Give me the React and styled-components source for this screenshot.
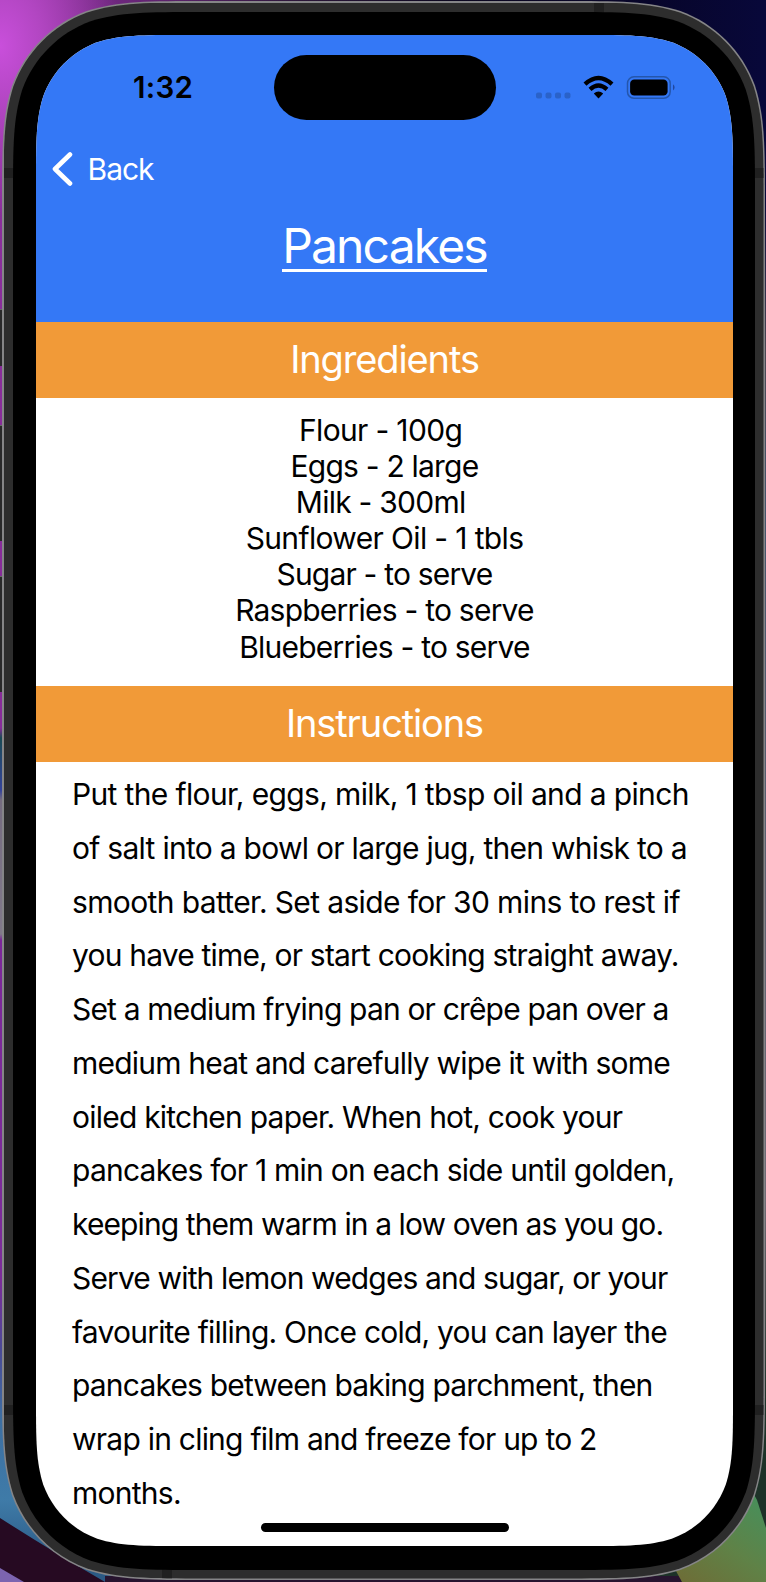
import React from 'react';
import styled, { createGlobalStyle } from 'styled-components';

const GlobalStyle = createGlobalStyle`
  * { box-sizing: border-box; }
  body { margin: 0; font-family: Inter, "Liberation Sans", sans-serif; }
`;

// Rounded rectangle with continuous-curvature corners of nominal radius r.
const smoothRect = (w, h, r) => {
  const e = 1.52866 * r;
  const c = 1.08849 * r;
  const d = 0.86841 * r;
  const m = 0.63149 * r;
  const n = 0.07491 * r;
  const p = 0.37282 * r;
  const q = 0.16906 * r;
  return `path("M${e} 0H${w - e}C${w - c} 0 ${w - d} 0 ${w - m} ${n}C${w - p} ${q} ${w - q} ${p} ${w - n} ${m}C${w} ${d} ${w} ${c} ${w} ${e}V${h - e}C${w} ${h - c} ${w} ${h - d} ${w - n} ${h - m}C${w - q} ${h - p} ${w - p} ${h - q} ${w - m} ${h - n}C${w - d} ${h} ${w - c} ${h} ${w - e} ${h}H${e}C${c} ${h} ${d} ${h} ${m} ${h - n}C${p} ${h - q} ${q} ${h - p} ${n} ${h - m}C0 ${h - d} 0 ${h - c} 0 ${h - e}V${e}C0 ${c} 0 ${d} ${n} ${m}C${q} ${p} ${p} ${q} ${m} ${n}C${d} 0 ${c} 0 ${e} 0Z")`;
};

const Desktop = styled.main`
  position: relative;
  width: 766px;
  height: 1582px;
  overflow: hidden;
  padding: 1px 1px 0 2px;
  background:
    radial-gradient(ellipse 120px 170px at 0 46px, #c94fdb 0, #b246c2 35%, transparent 100%) 0 0 / 200px 300px no-repeat,
    linear-gradient(90deg, #8a3197, #6a267a 130px, #2b1638 300px, #0d0820 450px, #07052a 650px, #08083a) 0 0 / 766px 150px no-repeat,
    linear-gradient(#8b2f9b, #872b99 728px, #1a4a55 738px, #34439a 790px, #756c80 800px, #81798a 934px, #7b2799 940px, #7b2c99 1280px, #4a4a96 1350px, #3d6fa2 1420px, #3f7ba8 1500px, #2b5a85 1560px) 0 0 / 383px 1582px no-repeat,
    linear-gradient(#08083a 200px, #4b4852 350px, #44546a 500px, #716c75 1200px, #1d3228 1400px, #1d3228) 383px 0 / 383px 1582px no-repeat;
`;

const Wallpaper = styled.svg`
  position: absolute;
  left: 0;
  bottom: 0;
  width: 766px;
  height: 182px;
`;

const SideButton = styled.i`
  position: absolute;
  left: 0;
  top: ${p => p.$top}px;
  width: 3px;
  height: ${p => p.$height}px;
  background: #29292a;
  border-top: 1px solid #69696b;
`;

const Rim = styled.section`
  position: relative;
  width: 763px;
  height: 1579px;
  padding: 1.5px;
  background: #858587;
  clip-path: ${smoothRect(763, 1579, 134)};
`;

const Band = styled.div`
  position: relative;
  width: 760px;
  height: 1576px;
  padding: 9.5px;
  background: #2d2d2d;
  clip-path: ${smoothRect(760, 1576, 132.5)};
`;

const Seam = styled.i`
  position: absolute;
  left: ${p => p.$x}px;
  top: ${p => p.$y}px;
  width: 10px;
  height: 10px;
  background: #202020;
`;

const Bezel = styled.div`
  position: relative;
  width: 742px;
  height: 1558px;
  padding: 23px;
  background: #000;
  clip-path: ${smoothRect(742, 1558, 123)};
`;

const Screen = styled.div`
  position: relative;
  display: flex;
  flex-direction: column;
  width: 697px;
  height: 1511px;
  background: #fff;
  clip-path: ${smoothRect(697, 1511, 97)};
`;

const Header = styled.header`
  display: flex;
  flex-direction: column;
  flex: 0 0 287px;
  color: #fff;
  background: #3478f6;
`;

const StatusBar = styled.div`
  display: flex;
  align-items: center;
  height: 105px;
  padding-left: 97px;
`;

const Time = styled.time`
  width: 140.5px;
  padding-bottom: 2px;
  color: #000;
  font-size: 29.5px;
  font-weight: 600;
  letter-spacing: 0.3px;
`;

const Island = styled.div`
  width: 222px;
  height: 65.5px;
  border-radius: 33px;
  background: #000;
`;

const StatusIcons = styled.svg`
  width: 150px;
  height: 32px;
  margin: 0 0 0 35.3px;
`;

const BackButton = styled.button`
  display: flex;
  align-items: center;
  gap: 14.5px;
  height: 58px;
  padding: 0 0 0 16px;
  border: 0;
  background: none;
  color: #fff;
  font: 400 30px Inter, sans-serif;
  letter-spacing: -1px;
`;

const Chevron = styled.svg`
  width: 21px;
  height: 36px;
`;

const Title = styled.h1`
  align-self: center;
  margin: 19px 0 0;
  height: 55px;
  border-bottom: 3px solid #fff;
  font-size: 48px;
  font-weight: 400;
  line-height: 58px;
  letter-spacing: -1.85px;
`;

const SectionTitle = styled.h2`
  flex: 0 0 76px;
  margin: 0;
  color: #fff;
  background: #f19a38;
  font-size: 38px;
  font-weight: 400;
  line-height: 75px;
  letter-spacing: -1.12px;
  text-align: center;
`;

const Ingredients = styled.ul`
  flex: 0 0 288px;
  margin: 0;
  padding: 14px 0 0;
  list-style: none;
  text-align: center;
  color: #000;
`;

const Ingredient = styled.li`
  height: 36.1px;
  font-size: 30px;
  line-height: 36.1px;
  letter-spacing: ${p => p.$track}px;
  white-space: pre;
`;

const Instructions = styled.div`
  padding: 6px 0 0 36px;
  color: #000;
`;

const Line = styled.div`
  height: 53.75px;
  font-size: 30px;
  line-height: 53.75px;
  letter-spacing: ${p => p.$track}px;
  white-space: nowrap;
`;

const HomeIndicator = styled.i`
  position: absolute;
  left: 225px;
  bottom: 14px;
  width: 248px;
  height: 9px;
  border-radius: 5px;
  background: #000;
`;

const ingredients = [
  ['Flour - 100g ', -0.67],
  ['Eggs - 2 large', -0.79],
  ['Milk - 300ml ', -0.75],
  ['Sunflower Oil - 1 tbls', -0.64],
  ['Sugar - to serve', -0.81],
  ['Raspberries - to serve', -0.77],
  ['Blueberries - to serve', -0.77],
];

const instructions = [
  ['Put the flour, eggs, milk, 1 tbsp oil and a pinch', -0.64],
  ['of salt into a bowl or large jug, then whisk to a', -0.72],
  ['smooth batter. Set aside for 30 mins to rest if', -0.63],
  ['you have time, or start cooking straight away.', -0.81],
  ['Set a medium frying pan or crêpe pan over a', -0.83],
  ['medium heat and carefully wipe it with some', -0.8],
  ['oiled kitchen paper. When hot, cook your', -0.78],
  ['pancakes for 1 min on each side until golden,', -0.77],
  ['keeping them warm in a low oven as you go.', -0.9],
  ['Serve with lemon wedges and sugar, or your', -0.86],
  ['favourite filling. Once cold, you can layer the', -0.78],
  ['pancakes between baking parchment, then', -0.82],
  ['wrap in cling film and freeze for up to 2', -0.77],
  ['months.', -0.75],
];

export default function App() {
  return (
    <>
      <GlobalStyle />
      <Desktop>
        <Wallpaper viewBox="0 1400 766 182">
          <defs>
            <linearGradient id="leaf" x1="0" y1="1" x2="0.6" y2="0">
              <stop offset="0" stopColor="#6f6b35" />
              <stop offset="0.5" stopColor="#5f8247" />
              <stop offset="1" stopColor="#46905c" />
            </linearGradient>
          </defs>
          <path d="M0 1518Q50 1550 105 1582H0Z" fill="#260a22" />
          <path d="M0 1568L24 1582H0Z" fill="#7c64b0" />
          <path d="M105 1576H690V1582H105Z" fill="#27142f" />
          <path d="M740 1470L757 1500L766 1528V1582H682L670 1560Z" fill="url(#leaf)" />
        </Wallpaper>
        <SideButton $top={309} $height={57} />
        <SideButton $top={425} $height={116} />
        <SideButton $top={576} $height={116} />
        <Rim>
          <Band>
            <Seam $x={0} $y={165} />
            <Seam $x={750} $y={165} />
            <Seam $x={590} $y={0} />
            <Seam $x={0} $y={1402} />
            <Seam $x={750} $y={1402} />
            <Seam $x={158} $y={1566} />
            <Bezel>
              <Screen>
                <Header>
                  <StatusBar>
                    <Time>1:32</Time>
                    <Island />
                    <StatusIcons viewBox="0 0 150 32">
                      <g fill="#2a62c9">
                        <rect x="5" y="20.5" width="6" height="6" rx="2" />
                        <rect x="14.5" y="20.5" width="6" height="6" rx="2" />
                        <rect x="24" y="20.5" width="6" height="6" rx="2" />
                        <rect x="33.5" y="20.5" width="6" height="6" rx="2" />
                      </g>
                      <g fill="none" stroke="#000" strokeWidth="4.3">
                        <path d="M54 12.2Q67.5 -0.2 81 12.2" />
                        <path d="M59 17.4Q67.5 9.6 76 17.4" />
                      </g>
                      <path d="M62.8 21.6Q67.5 17.4 72.2 21.6L67.5 26.6Z" />
                      <rect x="96.5" y="4.8" width="42.7" height="21.5" rx="6.5" fill="none" stroke="#2456ac" strokeWidth="1.5" />
                      <rect x="99.1" y="7.6" width="37.5" height="16" rx="4.2" />
                      <path d="M142 12.3Q145.3 15.4 142 18.5Z" fill="#2048a0" />
                    </StatusIcons>
                  </StatusBar>
                  <BackButton>
                    <Chevron viewBox="0 0 21 36">
                      <path d="M18 3.5L3 18L18 32.5" fill="none" stroke="#fff" strokeWidth="4.6" strokeLinecap="round" strokeLinejoin="round" />
                    </Chevron>
                    Back
                  </BackButton>
                  <Title>Pancakes</Title>
                </Header>
                <SectionTitle>Ingredients</SectionTitle>
                <Ingredients>
                  {ingredients.map(([text, track]) => <Ingredient key={text} $track={track}>{text}</Ingredient>)}
                </Ingredients>
                <SectionTitle>Instructions</SectionTitle>
                <Instructions>
                  {instructions.map(([text, track]) => <Line key={text} $track={track}>{text}</Line>)}
                </Instructions>
                <HomeIndicator />
              </Screen>
            </Bezel>
          </Band>
        </Rim>
      </Desktop>
    </>
  );
}
